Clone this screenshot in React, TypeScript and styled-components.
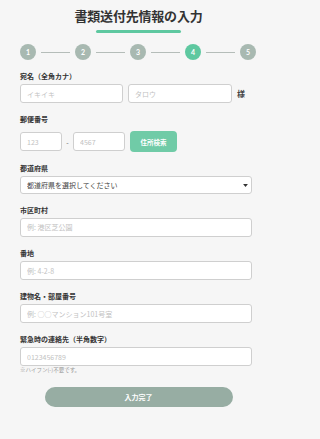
import React from "react";
import styled, { createGlobalStyle } from "styled-components";

const GlobalStyle = createGlobalStyle`
  html, body {
    margin: 0;
    padding: 0;
    background: #f6f6f6;
  }
  body {
    font-family: "Noto Sans CJK JP", "Noto Sans", sans-serif;
    color: #333;
  }
  * {
    box-sizing: border-box;
  }
`;

const steps = [1, 2, 3, 4, 5];
const current = 4;

const App = () => {
  return (
    <>
      <GlobalStyle />
      <Page>
        <Header>
          <Title>書類送付先情報の入力</Title>
          <TitleBar />
        </Header>
        <Stepper>
          {steps.map((n, i) => (
            <React.Fragment key={n}>
              {i > 0 && <StepLine />}
              <StepDot $active={n === current}>{n}</StepDot>
            </React.Fragment>
          ))}
        </Stepper>

        <Field $space={11}>
          <Label>宛名（全角カナ）</Label>
          <NameRow>
            <Input placeholder="イキイキ" />
            <Input placeholder="タロウ" />
            <Suffix>様</Suffix>
          </NameRow>
        </Field>

        <Field>
          <Label $gap={7}>郵便番号</Label>
          <PostalRow>
            <Input placeholder="123" $w={42} />
            <Hyphen>-</Hyphen>
            <Input placeholder="4567" $w={52} />
            <SearchButton type="button">住所検索</SearchButton>
          </PostalRow>
        </Field>

        <Field $space={11}>
          <Label>都道府県</Label>
          <SelectWrap>
            <Select defaultValue="">
              <option value="">都道府県を選択してください</option>
            </Select>
            <Caret viewBox="0 0 8 5">
              <path d="M0 0h8L4 5z" fill="#333" />
            </Caret>
          </SelectWrap>
        </Field>

        <Field $space={10.5}>
          <Label>市区町村</Label>
          <Input placeholder="例: 港区芝公園" />
        </Field>

        <Field $space={11.5}>
          <Label>番地</Label>
          <Input placeholder="例: 4-2-8" />
        </Field>

        <Field $space={11}>
          <Label>建物名・部屋番号</Label>
          <Input placeholder="例: ○○マンション101号室" />
        </Field>

        <Field $space={11}>
          <Label>緊急時の連絡先（半角数字）</Label>
          <Input placeholder="0123456789" />
          <Note>※ハイフン(-)不要です。</Note>
        </Field>

        <SubmitButton type="button">入力完了</SubmitButton>
      </Page>
    </>
  );
};

export default App;

const Page = styled.div`
  width: 277px;
  min-height: 439px;
  padding: 0 20px 28px;
`;

const Header = styled.div`
  display: flex;
  flex-direction: column;
  align-items: center;
  padding-top: 6px;
`;

const Title = styled.h1`
  margin: 0;
  font-size: 13px;
  line-height: 20px;
  font-weight: 700;
  color: #333;
  letter-spacing: -0.2px;
`;

const TitleBar = styled.div`
  margin-top: 4px;
  width: 85px;
  height: 3px;
  border-radius: 2px;
  background: #5ec8a0;
`;

const Stepper = styled.div`
  display: flex;
  align-items: center;
  width: 236px;
  margin-top: 11px;
`;

const StepDot = styled.div<{ $active?: boolean }>`
  flex: 0 0 16px;
  width: 16px;
  height: 16px;
  border-radius: 50%;
  display: flex;
  align-items: center;
  justify-content: center;
  background: ${(p) => (p.$active ? "#5ec8a0" : "#a8b9b1")};
  color: #fff;
  font-family: "Lato", "Noto Sans", sans-serif;
  font-size: 7px;
  font-weight: 700;
`;

const StepLine = styled.div`
  flex: 1;
  height: 1px;
  margin: 0 5px;
  background: #b5bdb9;
`;

const Field = styled.div<{ $space?: number }>`
  width: 232px;
  margin-top: ${(p) => p.$space ?? 11}px;
`;

const Label = styled.label<{ $gap?: number }>`
  display: block;
  font-size: 7px;
  line-height: 10px;
  font-weight: 700;
  color: #333;
  margin-bottom: ${(p) => p.$gap ?? 3}px;
`;

const Input = styled.input<{ $w?: number }>`
  display: block;
  width: ${(p) => (p.$w ? `${p.$w}px` : "100%")};
  min-width: 0;
  height: 19px;
  padding: 0 6px;
  border: 1px solid #cfcfcf;
  border-radius: 3px;
  background: #fff;
  font-family: "Noto Sans CJK JP", "Noto Sans", sans-serif;
  font-size: 7px;
  color: #333;
  outline: none;
  &::placeholder {
    color: #c2c2c2;
  }
`;

const NameRow = styled.div`
  display: grid;
  grid-template-columns: 103px 104px 1fr;
  align-items: center;
  gap: 5px;
  width: 232px;
`;

const Suffix = styled.span`
  font-size: 8px;
  font-weight: 700;
  color: #444;
`;

const PostalRow = styled.div`
  display: flex;
  align-items: center;
`;

const Hyphen = styled.span`
  width: 11px;
  text-align: center;
  font-size: 7px;
  color: #666;
`;

const SearchButton = styled.button`
  margin-left: 5px;
  width: 47px;
  height: 21px;
  border: none;
  border-radius: 4px;
  background: #70cba7;
  color: #fff;
  font-family: "Noto Sans CJK JP", "Noto Sans", sans-serif;
  font-size: 6.5px;
  font-weight: 700;
  padding: 0;
`;

const SelectWrap = styled.div`
  position: relative;
  width: 100%;
`;

const Select = styled.select`
  display: block;
  appearance: none;
  width: 100%;
  height: 18px;
  padding: 0 6px;
  border: 1px solid #cfcfcf;
  border-radius: 3px;
  background: #fff;
  font-family: "Noto Sans CJK JP", "Noto Sans", sans-serif;
  font-size: 7px;
  color: #444;
  outline: none;
`;

const Caret = styled.svg`
  position: absolute;
  right: 4px;
  top: 8px;
  width: 5px;
  height: 3px;
  pointer-events: none;
`;

const Note = styled.div`
  margin-top: 0;
  font-size: 5.5px;
  line-height: 8px;
  color: #9a9a9a;
`;

const SubmitButton = styled.button`
  display: block;
  margin: 13px auto 0;
  width: 188px;
  height: 20px;
  border: none;
  border-radius: 10px;
  background: #97ada3;
  color: #fff;
  font-family: "Noto Sans CJK JP", "Noto Sans", sans-serif;
  font-size: 7px;
  font-weight: 700;
`;
